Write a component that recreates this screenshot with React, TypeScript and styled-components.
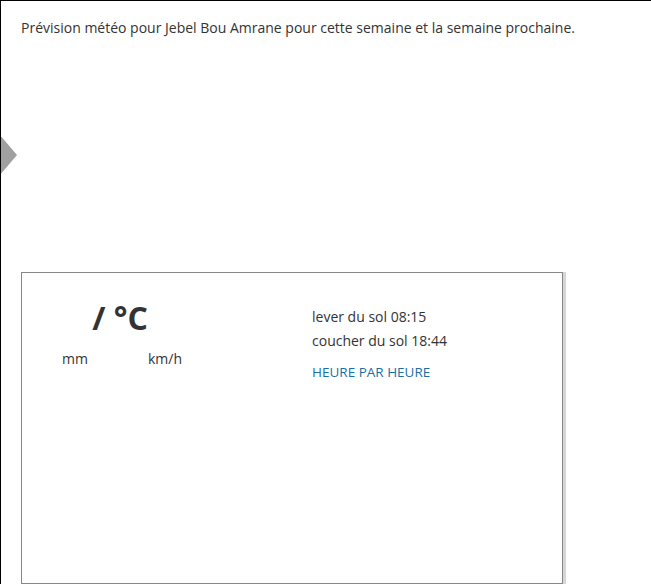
import React from "react";
import styled, { createGlobalStyle } from "styled-components";

const Global = createGlobalStyle`
  html, body { margin: 0; padding: 0; background: #fff; }
  body { font-family: "Open Sans", "Noto Sans", sans-serif; color: #333; }
`;

const Frame = styled.div`
  position: relative;
  box-sizing: border-box;
  width: 651px;
  height: 584px;
  border-top: 1px solid #000;
  border-left: 1px solid #000;
  padding: 17px 0 0 20px;
  overflow: hidden;
`;

const Intro = styled.p`
  margin: 0;
  font-size: 14px;
  line-height: 20px;
  color: #333;
`;

const Arrow = styled.div`
  position: absolute;
  left: -1px;
  top: 134px;
  width: 0;
  height: 0;
  border-top: 20px solid transparent;
  border-bottom: 20px solid transparent;
  border-left: 17px solid #a0a0a0;
`;

const Card = styled.section`
  box-sizing: border-box;
  margin-top: 234px;
  width: 542px;
  height: 312px;
  border: 1px solid #888;
  box-shadow: 3px 0 0 #d6d6d6;
  display: grid;
  grid-template-columns: 290px 1fr;
  padding-top: 24px;
`;

const Left = styled.div`
  padding-left: 40px;
`;

const Block = styled.div`
  width: 120px;
  display: flex;
  flex-direction: column;
`;

const Temp = styled.div`
  text-align: center;
  font-size: 32px;
  font-weight: 700;
  line-height: 42px;
  color: #333;
  margin-left: -4px;
`;

const Units = styled.div`
  display: flex;
  justify-content: space-between;
  font-size: 14px;
  line-height: 20px;
  margin-top: 10px;
`;

const Right = styled.div`
  display: flex;
  flex-direction: column;
  padding-top: 8px;
`;

const Line = styled.div`
  font-size: 14px;
  line-height: 24px;
`;

const Link = styled.a`
  margin-top: 7px;
  font-size: 13.5px;
  line-height: 24px;
  color: #1c6fa3;
  text-decoration: none;
`;

export default function App() {
  return (
    <>
      <Global />
      <Frame>
        <Intro>Prévision météo pour Jebel Bou Amrane pour cette semaine et la semaine prochaine.</Intro>
        <Arrow />
        <Card>
          <Left>
            <Block>
              <Temp>/ °C</Temp>
              <Units>
                <span>mm</span>
                <span>km/h</span>
              </Units>
            </Block>
          </Left>
          <Right>
            <Line>lever du sol 08:15</Line>
            <Line>coucher du sol 18:44</Line>
            <Link href="#">HEURE PAR HEURE</Link>
          </Right>
        </Card>
      </Frame>
    </>
  );
}
